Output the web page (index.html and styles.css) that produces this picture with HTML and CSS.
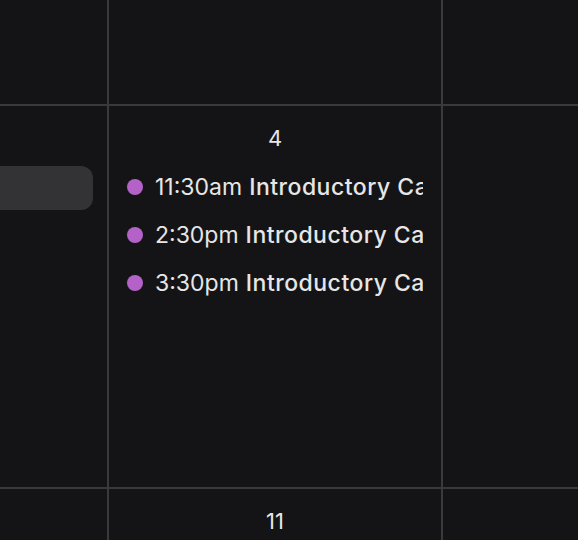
FILE: index.html
```html
<!DOCTYPE html>
<html>
<head>
<meta charset="utf-8">
<link rel="stylesheet" href="styles.css">
</head>
<body>
<div class="grid">
  <div class="cell"></div>
  <div class="cell"></div>
  <div class="cell"></div>

  <div class="cell left">
    <div class="pill"></div>
  </div>
  <div class="cell day">
    <div class="num">4</div>
    <div class="events">
      <div class="event"><span class="dot"></span><span class="time">11:30am</span><span class="title">Introductory Call</span></div>
      <div class="event"><span class="dot"></span><span class="time">2:30pm</span><span class="title">Introductory Call</span></div>
      <div class="event"><span class="dot"></span><span class="time">3:30pm</span><span class="title">Introductory Call</span></div>
    </div>
  </div>
  <div class="cell"></div>

  <div class="cell"></div>
  <div class="cell day">
    <div class="num">11</div>
  </div>
  <div class="cell"></div>
</div>
</body>
</html>
```

FILE: styles.css
```css
html, body {
  margin: 0;
  padding: 0;
  background: #141416;
  overflow: hidden;
}
.grid {
  display: grid;
  grid-template-columns: 107px 332px 140px;
  grid-template-rows: 104px 381px 60px;
  gap: 2px;
  background: #3a3a3c;
  width: 583px;
  height: 551px;
  font-family: Inter, Roboto, sans-serif;
  color: #e6e6e6;
}
.cell {
  background: #141416;
  min-width: 0;
  overflow: hidden;
}
.left {
  padding-top: 60px;
}
.pill {
  height: 44px;
  width: 93px;
  background: #333336;
  border-radius: 0 12px 12px 0;
}
.day {
  padding: 20px 18px 0 18px;
  display: flex;
  flex-direction: column;
}
.num {
  text-align: center;
  font-size: 22px;
  line-height: 24px;
}
.events {
  margin-top: 13px;
  display: flex;
  flex-direction: column;
}
.event {
  display: flex;
  align-items: center;
  height: 48px;
  white-space: nowrap;
  overflow: hidden;
  font-size: 23px;
}
.dot {
  flex: none;
  width: 16px;
  height: 16px;
  border-radius: 50%;
  background: #b462c8;
  margin-right: 12px;
}
.time {
  flex: none;
  margin-right: 7px;
}
.title {
  font-weight: 500;
  letter-spacing: 0.5px;
}
```
